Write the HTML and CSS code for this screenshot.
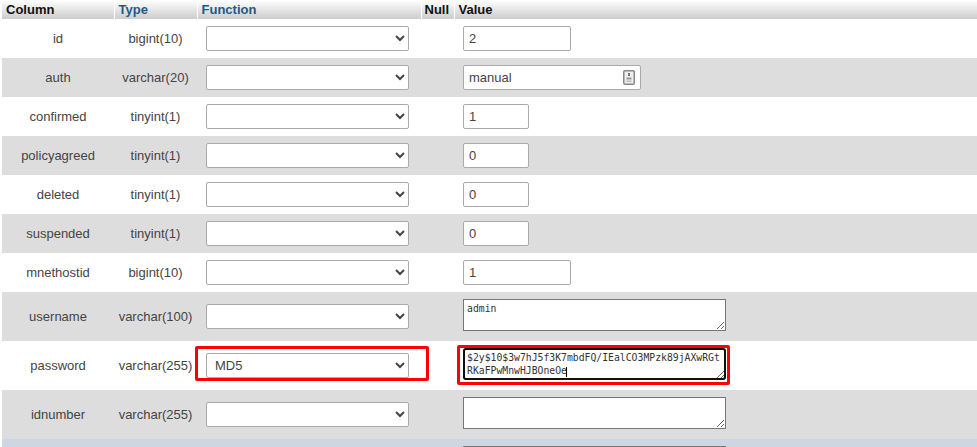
FILE: index.html
```html
<!DOCTYPE html>
<html lang="en">
<head>
<meta charset="utf-8">
<title>Edit row</title>
<link rel="stylesheet" href="styles.css">
</head>
<body>
<div class="page">
<table class="grid">
<colgroup><col class="c-col"><col class="c-type"><col class="c-fn"><col class="c-null"><col></colgroup>
<thead><tr><th class="h-dark">Column</th><th class="h-blue">Type</th><th class="h-blue">Function</th><th class="h-dark h-null">Null</th><th class="h-dark">Value</th></tr></thead>
<tbody>
<tr><td class="name">id</td><td class="name">bigint(10)</td><td class="fn"><select class="sel"><option></option></select></td><td></td><td class="val"><input class="inp w-big" value="2"></td></tr>
<tr class="alt"><td class="name">auth</td><td class="name">varchar(20)</td><td class="fn"><select class="sel"><option></option></select></td><td></td><td class="val"><span class="keyed"><input class="inp w-long" value="manual"><svg class="key" viewBox="0 0 12 15" width="12" height="15" aria-hidden="true"><rect x="0.75" y="0.75" width="10.5" height="13.5" rx="1.2" fill="#eee" stroke="#888" stroke-width="1.5"/><rect x="5" y="3" width="2" height="3" fill="#777"/><path d="M3.5 7.5h5v2h-5z" fill="#999"/><path d="M3.5 10.5h5v1.5h-5z" fill="#bbb"/></svg></span></td></tr>
<tr><td class="name">confirmed</td><td class="name">tinyint(1)</td><td class="fn"><select class="sel"><option></option></select></td><td></td><td class="val"><input class="inp w-small" value="1"></td></tr>
<tr class="alt"><td class="name">policyagreed</td><td class="name">tinyint(1)</td><td class="fn"><select class="sel"><option></option></select></td><td></td><td class="val"><input class="inp w-small" value="0"></td></tr>
<tr><td class="name">deleted</td><td class="name">tinyint(1)</td><td class="fn"><select class="sel"><option></option></select></td><td></td><td class="val"><input class="inp w-small" value="0"></td></tr>
<tr class="alt"><td class="name">suspended</td><td class="name">tinyint(1)</td><td class="fn"><select class="sel"><option></option></select></td><td></td><td class="val"><input class="inp w-small" value="0"></td></tr>
<tr><td class="name">mnethostid</td><td class="name">bigint(10)</td><td class="fn"><select class="sel"><option></option></select></td><td></td><td class="val"><input class="inp w-big" value="1"></td></tr>
<tr class="alt tall"><td class="name">username</td><td class="name">varchar(100)</td><td class="fn"><select class="sel"><option></option></select></td><td></td><td class="val top"><textarea class="txt">admin</textarea></td></tr>
<tr class="tall"><td class="name">password</td><td class="name">varchar(255)</td><td class="fn"><span class="mark"><select class="sel"><option>MD5</option></select><span class="box box-fn"></span></span></td><td></td><td class="val top"><span class="mark"><textarea class="txt txt-focus">$2y$10$3w7hJ5f3K7mbdFQ/IEalCO3MPzk89jAXwRGtRKaFPwMnwHJBOneOe</textarea><span class="box box-val"></span><span class="caret"></span></span></td></tr>
<tr class="alt tall"><td class="name">idnumber</td><td class="name">varchar(255)</td><td class="fn"><select class="sel"><option></option></select></td><td></td><td class="val top"><textarea class="txt"></textarea></td></tr>
<tr class="next tall"><td></td><td></td><td></td><td></td><td class="val"><textarea class="txt"></textarea></td></tr>
</tbody>
</table>
</div>
</body>
</html>
```
FILE: styles.css
```css
html, body {
  margin: 0;
  background: #fff;
}
.page {
  height: 447px;
  overflow: hidden;
  padding-left: 2px;
  font-family: "Liberation Sans", Arial, sans-serif;
  font-size: 13px;
  color: #444;
}
.grid {
  width: 975px;
  table-layout: fixed;
  border-collapse: collapse;
  border-spacing: 0;
}
.c-col { width: 112px; }
.c-type { width: 83px; }
.c-fn { width: 224px; }
.c-null { width: 33px; }
th {
  height: 19px;
  padding: 0 0 0 4px;
  box-sizing: border-box;
  text-align: left;
  font-size: 13px;
  font-weight: bold;
  border-right: 1px solid #fff;
  background: linear-gradient(#fff, #ccc);
}
th:last-child { border-right: 0; }
.h-dark { color: #111; }
.h-blue { color: #235a81; }
.h-null { padding-left: 3px; }
td {
  height: 39px;
  padding: 0;
  box-sizing: border-box;
  vertical-align: middle;
}
.tall td { height: 49px; }
.alt td { background: #ddd; }
.next td { background: #ced6e2; vertical-align: top; padding-top: 7px; }
.name { text-align: center; white-space: nowrap; }
.fn { padding-left: 9px; }
td.val { padding-left: 9px; }
td.top { vertical-align: top; padding-top: 7px; }
.sel {
  display: block;
  width: 203px;
  height: 25px;
  padding: 0 0 0 4px;
  margin: 0;
  box-sizing: border-box;
  border: 1px solid #aaa;
  border-radius: 2px;
  background-color: #fff;
  font: 13px "Liberation Sans", Arial, sans-serif;
  color: #444;
}
.inp {
  display: block;
  height: 25px;
  margin: 0;
  padding: 0 5px;
  box-sizing: border-box;
  border: 1px solid #aaa;
  border-radius: 2px;
  background: #fff;
  font: 13px "Liberation Sans", Arial, sans-serif;
  color: #444;
}
.w-big { width: 108px; }
.w-small { width: 66px; }
.w-long { width: 178px; }
.keyed { display: block; position: relative; width: 178px; }
.key { position: absolute; right: 6px; top: 5px; }
.txt {
  display: block;
  width: 263px;
  height: 32px;
  margin: 0;
  padding: 2px 3px;
  box-sizing: border-box;
  border: 1px solid #767676;
  border-radius: 0;
  background: #fff;
  font: 9.77px/13px "DejaVu Sans Mono", "Liberation Mono", monospace;
  color: #333;
  resize: both;
  overflow: hidden;
  word-break: break-all;
}
.txt-focus {
  outline: 2px solid #101010;
  outline-offset: -2px;
  border-radius: 3px;
}
.mark { display: block; position: relative; width: max-content; }
.box {
  position: absolute;
  border: 3px solid #f00;
  border-radius: 2px;
  box-sizing: border-box;
  pointer-events: none;
}
.box-fn { left: -11px; top: -7px; width: 234px; height: 35px; }
.box-val { left: -6px; top: -3px; width: 273px; height: 40px; }
.caret {
  position: absolute;
  left: 103px;
  top: 19px;
  width: 1px;
  height: 10px;
  background: #000;
}
```
